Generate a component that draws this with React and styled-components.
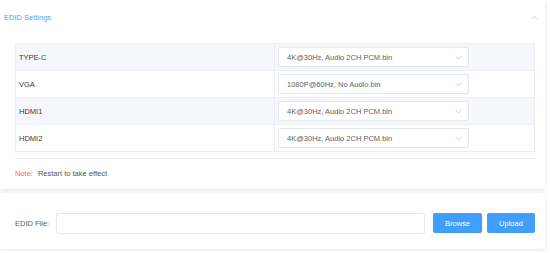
import React from "react";
import styled, { createGlobalStyle } from "styled-components";

const GlobalStyle = createGlobalStyle`
  html, body {
    margin: 0;
    padding: 0;
    background: #ffffff;
    font-family: "Liberation Sans", Arial, sans-serif;
  }
`;

const rows = [
  { name: "TYPE-C", value: "4K@30Hz, Audio 2CH PCM.bin" },
  { name: "VGA", value: "1080P@60Hz, No Audio.bin" },
  { name: "HDMI1", value: "4K@30Hz, Audio 2CH PCM.bin" },
  { name: "HDMI2", value: "4K@30Hz, Audio 2CH PCM.bin" },
];

const Chevron = ({ up }) => (
  <svg width="7" height="5" viewBox="0 0 10 6" fill="none">
    <path
      d={up ? "M1 5.5 L5 1.5 L9 5.5" : "M1 1 L5 5 L9 1"}
      stroke="#c0c4cc"
      strokeWidth="1.2"
    />
  </svg>
);

const App = () => {
  return (
    <Page>
      <GlobalStyle />
      <Card>
        <Header>
          <Title>EDID Settings</Title>
          <Chevron up />
        </Header>
        <Table>
          {rows.map((r, i) => (
            <Row key={r.name} $striped={i % 2 === 0}>
              <NameCell>{r.name}</NameCell>
              <ValueCell>
                <Select>
                  <span>{r.value}</span>
                  <Chevron />
                </Select>
              </ValueCell>
            </Row>
          ))}
        </Table>
        <NoteBar>
          <NoteLabel>Note:</NoteLabel>
          <span>Restart to take effect</span>
        </NoteBar>
      </Card>
      <FileCard>
        <FileLabel>EDID File:</FileLabel>
        <FileInput />
        <Button>Browse</Button>
        <Button>Upload</Button>
      </FileCard>
    </Page>
  );
};

export default App;

const Page = styled.div`
  width: 550px;
  height: 253px;
  padding-right: 5px;
  box-sizing: border-box;
  display: flex;
  flex-direction: column;
  gap: 4px;
  overflow: hidden;
`;

const Card = styled.div`
  background: #fff;
  box-shadow: 0 2px 4px rgba(0, 0, 0, 0.1);
  padding: 0 10px 0 15px;
  height: 189px;
  box-sizing: border-box;
`;

const Header = styled.div`
  height: 34px;
  margin-left: -11px;
  margin-right: -3px;
  display: flex;
  align-items: center;
  justify-content: space-between;
  padding-top: 1px;
  box-sizing: border-box;
`;

const Title = styled.span`
  font-size: 7.5px;
  color: #5a9ef8;
`;

const Table = styled.div`
  margin-top: 9px;
  width: 520px;
  border: 1px solid #ebeef5;
  border-bottom: none;
  box-sizing: border-box;
`;

const Row = styled.div`
  display: grid;
  grid-template-columns: 259px 1fr;
  height: 27px;
  box-sizing: border-box;
  background: ${(p) => (p.$striped ? "#f5f7fa" : "#fff")};
  border-bottom: 1px solid #ebeef5;
`;

const NameCell = styled.div`
  display: flex;
  align-items: center;
  padding-left: 3px;
  font-size: 7.5px;
  color: #3a3a3a;
  border-right: 1px solid #ebeef5;
`;

const ValueCell = styled.div`
  display: flex;
  align-items: center;
  padding-left: 3px;
`;

const Select = styled.div`
  width: 191px;
  height: 20px;
  box-sizing: border-box;
  border: 1px solid #e4e7ed;
  border-radius: 2px;
  background: #fff;
  display: flex;
  align-items: center;
  justify-content: space-between;
  padding: 0 6px 0 8px;
  font-size: 7.5px;
  color: #606266;
`;

const NoteBar = styled.div`
  margin-top: 6px;
  width: 520px;
  border-top: 1px solid #ebeef5;
  height: 26px;
  display: flex;
  align-items: center;
  gap: 5px;
  padding-top: 1px;
  font-size: 7.5px;
  color: #555;
`;

const NoteLabel = styled.span`
  color: #f56c6c;
`;

const FileCard = styled.div`
  background: #fff;
  box-shadow: 0 1px 3px rgba(0, 0, 0, 0.1);
  height: 56px;
  box-sizing: border-box;
  padding: 0 10px 0 15px;
  display: flex;
  align-items: center;
  padding-top: 4px;
`;

const FileLabel = styled.span`
  font-size: 7.5px;
  color: #606266;
  width: 41px;
`;

const FileInput = styled.div`
  width: 369px;
  height: 21px;
  box-sizing: border-box;
  border: 1px solid #e4e7ed;
  border-radius: 2px;
  margin-right: 8px;
`;

const Button = styled.button`
  height: 20px;
  width: 49px;
  margin-right: 5px;
  border: none;
  border-radius: 2px;
  background: #409eff;
  color: #fff;
  font-family: inherit;
  font-size: 7.5px;
  padding: 0;
  &:last-child {
    margin-right: 0;
    width: 48px;
  }
`;
